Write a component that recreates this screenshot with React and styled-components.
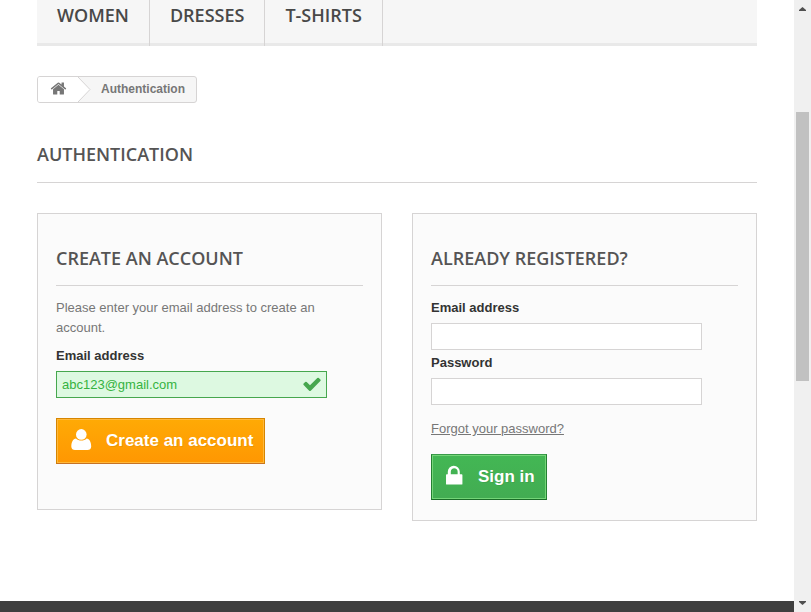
import React from "react";
import styled, { createGlobalStyle } from "styled-components";

const GlobalStyle = createGlobalStyle`
  *, *::before, *::after { box-sizing: border-box; }
  body {
    margin: 0;
    background: #fff;
    color: #777;
    font: 13px/20px "Liberation Sans", Arial, sans-serif;
  }
`;

const Window = styled.div`
  display: flex;
  height: 100vh;
  overflow: hidden;
`;

const Page = styled.div`
  flex: 1;
  min-width: 0;
  display: flex;
  flex-direction: column;
`;

const Container = styled.div`
  flex: 1;
  padding: 0 37px;
`;

const Menu = styled.nav`
  display: flex;
  height: 46px;
  background: #f6f6f6;
  box-shadow: inset 0 -3px #e9e9e9;
`;

const MenuLink = styled.a`
  padding: 3px 20px 0;
  border-right: 1px solid #d6d4d4;
  color: #484848;
  font: 600 18px/25px "Open Sans", sans-serif;
  text-decoration: none;
  text-transform: uppercase;
`;

const Breadcrumb = styled.nav`
  display: inline-flex;
  height: 27px;
  margin-top: 30px;
  border: 1px solid #d6d4d4;
  border-radius: 3px;
  background: #f6f6f6;
  color: #777;
  font-weight: 700;
  font-size: 12px;
  line-height: 24px;
  overflow: hidden;
`;

const HomeLink = styled.a`
  display: flex;
  padding: 3px 0 0 12px;
  width: 40px;
  background: #fff;
  color: #777;
`;

const Chevron = styled.svg`
  width: 13px;
  height: 25px;
`;

const Crumb = styled.span`
  padding: 0 11px 0 10px;
`;

const Heading = styled.h1`
  margin: 0;
  border-bottom: 1px solid #d6d4d4;
  color: #555454;
  font: 600 18px/22px "Open Sans", sans-serif;
  text-transform: uppercase;
`;

const PageHeading = styled(Heading)`
  margin: 40px 0 30px;
  padding-bottom: 17px;
`;

const CardHeading = styled(Heading)`
  margin-bottom: 12px;
  padding-bottom: 16px;
`;

const Columns = styled.div`
  display: grid;
  grid-template-columns: 1fr 1fr;
  align-items: start;
  gap: 30px;
`;

const Card = styled.form`
  min-height: 297px;
  padding: 33px 18px 20px;
  border: 1px solid #d6d4d4;
  background: #fbfbfb;
`;

const Intro = styled.p`
  margin: 0 0 8px;
`;

const Field = styled.div`
  margin-bottom: ${(p) => (p.$last ? 14 : 3)}px;
`;

const Label = styled.label`
  display: block;
  margin-bottom: 5px;
  color: #333;
  font-weight: 700;
`;

const InputWrap = styled.div`
  position: relative;
  max-width: 271px;
`;

const Input = styled.input`
  display: block;
  width: 100%;
  height: 27px;
  padding: 3px 5px;
  border: 1px solid ${(p) => (p.$valid ? "#46a74e" : "#d6d4d4")};
  border-radius: 0;
  outline: none;
  background: ${(p) => (p.$valid ? "#ddf9e1" : "#fff")};
  color: ${(p) => (p.$valid ? "#35b33f" : "#9c9b9b")};
  font: 13px/19px "Liberation Sans", Arial, sans-serif;
`;

const ValidMark = styled.span`
  position: absolute;
  top: 3px;
  right: 5px;
  display: flex;
  color: #46a74e;
`;

const Glyph = styled.svg`
  flex: none;
  width: ${(p) => p.$width}px;
  height: ${(p) => p.$height ?? p.$width}px;
  fill: currentColor;
`;

const ForgotLink = styled.a`
  display: table;
  margin-bottom: 15px;
  color: #777;
  text-decoration: underline;
`;

const tones = {
  orange: {
    edge: "#d68500 #d68500 #c77222",
    inner: "#ffb83a",
    fill: "linear-gradient(#ffaa05, #ff9702)",
  },
  green: {
    edge: "#399a49 #247f32 #1a6d27",
    inner: "#74d578",
    fill: "linear-gradient(#43b754, #42ac52)",
  },
};

const Button = styled.button`
  display: flex;
  align-items: center;
  gap: 13px;
  height: 46px;
  margin-top: ${(p) => (p.$spaced ? 20 : 0)}px;
  padding: 0 11px 2px 12px;
  border: 1px solid;
  border-color: ${(p) => tones[p.$tone].edge};
  background: ${(p) => tones[p.$tone].fill};
  box-shadow: inset 0 0 0 1px ${(p) => tones[p.$tone].inner};
  color: #fff;
  font: 700 17px/21px "Liberation Sans", Arial, sans-serif;
  text-shadow: 1px 1px rgba(0, 0, 0, 0.08);
`;

const Footer = styled.footer`
  height: 11px;
  background: #3f3f3f;
`;

const ScrollTrack = styled.div`
  width: 17px;
  display: flex;
  flex-direction: column;
  align-items: center;
  background: #f0f0f0;
`;

const ScrollThumb = styled.div`
  width: 13px;
  height: 44%;
  margin-top: 95px;
  margin-bottom: auto;
  background: #c1c1c1;
`;

const Arrow = styled.svg`
  width: 17px;
  height: 17px;
  fill: #505050;
`;

function HomeIcon() {
  return (
    <Glyph $width={17} viewBox="0 0 1792 1792" aria-hidden="true">
      <path d="M1472 992v480q0 26-19 45t-45 19h-384v-384h-256v384h-384q-26 0-45-19t-19-45v-480q0-1 .5-3t.5-3l575-474 575 474q1 2 1 6zm223-69l-62 74q-8 9-21 11h-3q-13 0-21-7l-692-577-692 577q-12 8-24 7-13-2-21-11l-62-74q-8-10-7-23.5t11-21.5l719-599q32-26 76-26t76 26l244 204v-195q0-14 9-23t23-9h192q14 0 23 9t9 23v408l219 182q10 8 11 21.5t-7 23.5z" />
    </Glyph>
  );
}

function CheckIcon() {
  return (
    <Glyph $width={20} viewBox="0 0 1792 1792" aria-hidden="true">
      <path d="M1671 566q0 40-28 68l-724 724-136 136q-28 28-68 28t-68-28l-136-136-362-362q-28-28-28-68t28-68l136-136q28-28 68-28t68 28l294 295 656-657q28-28 68-28t68 28l136 136q28 28 28 68z" />
    </Glyph>
  );
}

function LockIcon() {
  return (
    <Glyph $width={21} $height={24} viewBox="133 0 1568 1792" aria-hidden="true">
      <path d="M640 768h512v-192q0-106-75-181t-181-75-181 75-75 181v192zm868 60v660q0 48-48 48h-1128q-48 0-48-48v-660q0-60 60-60h72v-192q0-184 132-316t316-132 316 132 132 316v192h136q60 0 60 60z" />
    </Glyph>
  );
}

function UserIcon() {
  return (
    <Glyph $width={24} viewBox="0 0 24 24" aria-hidden="true">
      <circle cx="12.3" cy="6.4" r="5.3" />
      <path d="M7 10.4C4 11 2.3 13.9 2.3 18.4C2.3 20.6 4 22 6 22H18.6C20.6 22 22.2 20.6 22.2 18.4C22.2 13.9 20.6 11 17.6 10.4C16.2 11.9 14.4 12.5 12.3 12.5C10.2 12.5 8.4 11.9 7 10.4Z" />
    </Glyph>
  );
}

export default function App() {
  const stop = (e) => e.preventDefault();
  return (
    <>
      <GlobalStyle />
      <Window>
        <Page>
          <Container>
            <Menu>
              <MenuLink href="#women">Women</MenuLink>
              <MenuLink href="#dresses">Dresses</MenuLink>
              <MenuLink href="#t-shirts">T-shirts</MenuLink>
            </Menu>
            <Breadcrumb aria-label="Breadcrumb">
              <HomeLink href="#home" aria-label="Home">
                <HomeIcon />
              </HomeLink>
              <Chevron viewBox="0 0 13 25" aria-hidden="true">
                <path d="M0 0L12 12.5L0 25Z" fill="#fff" />
                <path d="M0 0L12 12.5L0 25" fill="none" stroke="#d6d4d4" />
              </Chevron>
              <Crumb>Authentication</Crumb>
            </Breadcrumb>
            <PageHeading>Authentication</PageHeading>
            <Columns>
              <Card onSubmit={stop}>
                <CardHeading as="h2">Create an account</CardHeading>
                <Intro>Please enter your email address to create an account.</Intro>
                <Field>
                  <Label htmlFor="email-create">Email address</Label>
                  <InputWrap>
                    <Input id="email-create" type="email" defaultValue="abc123@gmail.com" $valid />
                    <ValidMark>
                      <CheckIcon />
                    </ValidMark>
                  </InputWrap>
                </Field>
                <Button type="submit" $tone="orange" $spaced>
                  <UserIcon />
                  Create an account
                </Button>
              </Card>
              <Card onSubmit={stop}>
                <CardHeading as="h2">Already registered?</CardHeading>
                <Field>
                  <Label htmlFor="email">Email address</Label>
                  <InputWrap>
                    <Input id="email" type="email" />
                  </InputWrap>
                </Field>
                <Field $last>
                  <Label htmlFor="password">Password</Label>
                  <InputWrap>
                    <Input id="password" type="password" />
                  </InputWrap>
                </Field>
                <ForgotLink href="#forgot">Forgot your password?</ForgotLink>
                <Button type="submit" $tone="green">
                  <LockIcon />
                  Sign in
                </Button>
              </Card>
            </Columns>
          </Container>
          <Footer />
        </Page>
        <ScrollTrack aria-hidden="true">
          <Arrow viewBox="0 0 17 17">
            <path d="M5 11V10L8.5 7L12 10V11Z" />
          </Arrow>
          <ScrollThumb />
          <Arrow viewBox="0 0 17 17">
            <path d="M5 6V7L8.5 10L12 7V6Z" />
          </Arrow>
        </ScrollTrack>
      </Window>
    </>
  );
}
